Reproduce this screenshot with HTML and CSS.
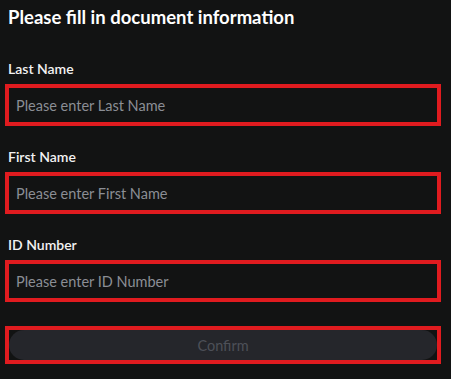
FILE: index.html
```html
<!DOCTYPE html>
<html lang="en">
  <head>
    <meta charset="UTF-8" />
    <meta name="viewport" content="width=device-width, initial-scale=1.0" />
    <title>Document Information</title>
    <link rel="stylesheet" href="styles.css">
  </head>
  <body>
    <div class="doc-form">
      <div class="form-title">Please fill in document information</div>

      <div class="form-field">
        <div class="field-label">Last Name</div>
        <input class="field-input" type="text" placeholder="Please enter Last Name" />
      </div>

      <div class="form-field">
        <div class="field-label">First Name</div>
        <input class="field-input" type="text" placeholder="Please enter First Name" />
      </div>

      <div class="form-field">
        <div class="field-label">ID Number</div>
        <input class="field-input" type="text" placeholder="Please enter ID Number" />
      </div>

      <div class="confirm-wrap">
        <button class="confirm-button" disabled>Confirm</button>
      </div>
    </div>
  </body>
</html>
```

FILE: styles.css
```css
* {
  margin: 0;
  padding: 0;
  box-sizing: border-box;
  font-family: Lato, "Open Sans", sans-serif;
}

body {
  background-color: #121313;
  height: 100vh;
  overflow: hidden;
}

.doc-form {
  padding: 5px 10px 0 5px;
}

.form-title {
  padding-left: 3px;
  font-size: 18.5px;
  font-weight: 700;
  line-height: 24px;
  color: #ffffff;
  margin-bottom: 30px;
}

.form-field {
  margin-bottom: 21px;
}

.field-label {
  padding-left: 3px;
  font-size: 14px;
  font-weight: 600;
  line-height: 20px;
  color: #f2f2f2;
  margin-bottom: 5px;
}

.field-input {
  display: block;
  width: 100%;
  height: 42px;
  padding: 0 7px;
  background-color: #121313;
  border: 4px solid #e01b1f;
  outline: none;
  font-size: 14.5px;
  color: #e0e0e0;
}

.field-input::placeholder {
  color: #8b8e95;
}

.confirm-wrap {
  margin-top: 24px;
  border: 4px solid #e01b1f;
  height: 38px;
  display: flex;
}

.confirm-button {
  flex: 1;
  border: none;
  border-radius: 18px;
  background-color: #25262b;
  color: #4d5058;
  font-size: 14.5px;
}
```
